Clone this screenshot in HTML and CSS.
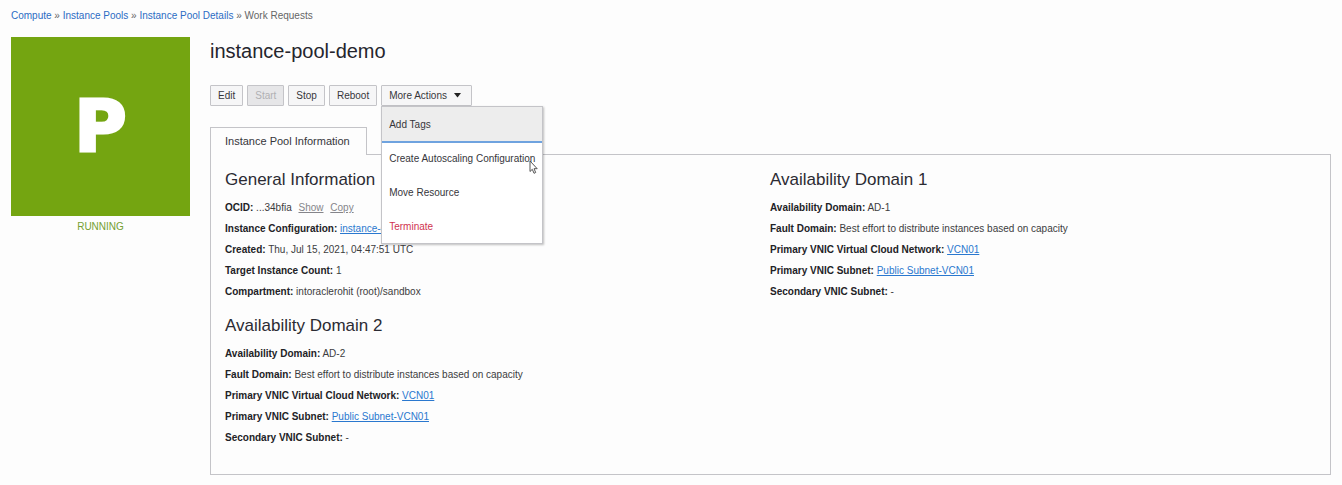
FILE: index.html
```html
<!DOCTYPE html>
<html lang="en">
<head>
  <meta charset="UTF-8">
  <meta name="viewport" content="width=device-width, initial-scale=1">
  <title>instance-pool-demo</title>
  <link rel="stylesheet" href="styles.css">
</head>
<body>
  <nav class="breadcrumb" aria-label="Breadcrumb">
    <a href="#">Compute</a> » <a href="#">Instance Pools</a> » <a href="#">Instance Pool Details</a> » <span>Work Requests</span>
  </nav>

  <div class="page">
    <aside class="status">
      <div class="status-icon">P</div>
      <div class="status-text">RUNNING</div>
    </aside>

    <main class="content">
      <h1>instance-pool-demo</h1>

      <div class="actions">
        <button type="button">Edit</button>
        <button type="button" disabled>Start</button>
        <button type="button">Stop</button>
        <button type="button">Reboot</button>
        <div class="dropdown">
          <button type="button" class="dropdown-toggle" aria-haspopup="true" aria-expanded="true">More Actions
            <svg class="caret" width="7" height="5" viewBox="0 0 7 5" aria-hidden="true"><path d="M0 0h7L3.500 4.500z" fill="#222"/></svg>
          </button>
          <div class="menu">
            <button type="button" class="menu-item active">Add Tags</button>
            <button type="button" class="menu-item">Create Autoscaling Configuration</button>
            <button type="button" class="menu-item">Move Resource</button>
            <button type="button" class="menu-item danger">Terminate</button>
            <svg class="cursor" width="9" height="14" viewBox="0 0 9 14" aria-hidden="true"><path d="M1 1v10.500l2.300-2.200 1.700 4 1.700-.8-1.700-3.800h3.200z" fill="#fff" stroke="#555" stroke-width="1"/></svg>
          </div>
        </div>
      </div>

      <div class="tabs">
        <button type="button" class="tab">Instance Pool Information</button>
      </div>

      <div class="panel">
        <section>
          <h2>General Information</h2>
          <p><b>OCID:</b> ...34bfia <a href="#" class="minor">Show</a> <a href="#" class="minor">Copy</a></p>
          <p><b>Instance Configuration:</b> <a href="#">instance-c</a></p>
          <p><b>Created:</b> Thu, Jul 15, 2021, 04:47:51 UTC</p>
          <p><b>Target Instance Count:</b> 1</p>
          <p><b>Compartment:</b> intoraclerohit (root)/sandbox</p>
        </section>
        <section>
          <h2>Availability Domain 1</h2>
          <p><b>Availability Domain:</b> AD-1</p>
          <p><b>Fault Domain:</b> Best effort to distribute instances based on capacity</p>
          <p><b>Primary VNIC Virtual Cloud Network:</b> <a href="#">VCN01</a></p>
          <p><b>Primary VNIC Subnet:</b> <a href="#">Public Subnet-VCN01</a></p>
          <p><b>Secondary VNIC Subnet:</b> -</p>
        </section>
        <section>
          <h2>Availability Domain 2</h2>
          <p><b>Availability Domain:</b> AD-2</p>
          <p><b>Fault Domain:</b> Best effort to distribute instances based on capacity</p>
          <p><b>Primary VNIC Virtual Cloud Network:</b> <a href="#">VCN01</a></p>
          <p><b>Primary VNIC Subnet:</b> <a href="#">Public Subnet-VCN01</a></p>
          <p><b>Secondary VNIC Subnet:</b> -</p>
        </section>
      </div>
    </main>
  </div>
</body>
</html>
```
FILE: styles.css
```css
* {
  box-sizing: border-box;
}
body {
  margin: 0;
  padding: 8px 11px 10px;
  font-family: "Liberation Sans", Arial, sans-serif;
  font-size: 10px;
  color: #3c3c40;
  background: #fdfdfd;
}
a {
  color: #2a78cf;
}
button {
  font-family: inherit;
  font-size: 10px;
  color: #36363b;
  cursor: pointer;
}
h1, h2, p {
  margin: 0;
  font-weight: normal;
}
.breadcrumb {
  line-height: 16px;
  color: #666;
}
.breadcrumb a {
  color: #2b6cc4;
  text-decoration: none;
}
.page {
  display: flex;
  gap: 20px;
  margin-top: 13px;
}
.status {
  width: 179px;
  flex-shrink: 0;
  text-align: center;
}
.status-icon {
  display: flex;
  align-items: center;
  justify-content: center;
  aspect-ratio: 1;
  background: #74a511;
  color: #fff;
  font-family: "DejaVu Sans", sans-serif;
  font-size: 71px;
  font-weight: bold;
  line-height: 1;
  -webkit-text-stroke: 3px #fff;
}
.status-text {
  line-height: 22px;
  color: #74a033;
}
.content {
  flex: 1;
  min-width: 0;
}
h1 {
  font-size: 20px;
  line-height: 28px;
  color: #25252d;
}
.actions {
  display: flex;
  gap: 4px;
  margin-top: 20px;
}
.actions > button,
.dropdown-toggle {
  height: 21px;
  padding: 0 7px;
  border: 1px solid #c4c4c8;
  border-radius: 1px;
  background: #f6f6f7;
}
.actions > button:disabled {
  background: #e6e6e8;
  color: #b0b0b3;
  cursor: default;
}
.dropdown {
  position: relative;
}
.dropdown-toggle {
  display: flex;
  align-items: center;
  gap: 7px;
  padding-right: 10px;
}
.menu {
  position: absolute;
  top: 100%;
  left: 0;
  z-index: 1;
  border: 1px solid #c4c4c8;
  background: #fff;
  box-shadow: 1px 1px 2px rgba(0,0,0,0.25);
}
.menu-item {
  display: block;
  width: 100%;
  height: 34px;
  padding: 0 7px;
  border: 0;
  background: none;
  text-align: left;
  white-space: nowrap;
}
.menu-item.active {
  background: #ededed;
  box-shadow: 0 2px 0 #6fa3df;
}
.menu-item.danger {
  color: #d03350;
}
.cursor {
  position: absolute;
  top: 53px;
  right: 4px;
}
.tabs {
  display: flex;
  margin-top: 21px;
}
.tab {
  height: 28px;
  margin-bottom: -1px;
  padding: 0 16px 1px 14px;
  border: 1px solid #c4c4c8;
  border-bottom: 0;
  background: #fdfdfd;
  font-size: 11px;
}
.panel {
  display: grid;
  grid-template-columns: 1fr 1fr;
  row-gap: 11px;
  padding: 12px 15px 26px 14px;
  border: 1px solid #c4c4c8;
}
.panel h2 {
  margin-bottom: 4px;
  font-size: 17px;
  line-height: 26px;
  color: #2b2b33;
}
.panel p {
  line-height: 21px;
}
.panel b {
  color: #222226;
}
.panel .minor {
  margin-left: 4px;
  color: #85858a;
}
```
